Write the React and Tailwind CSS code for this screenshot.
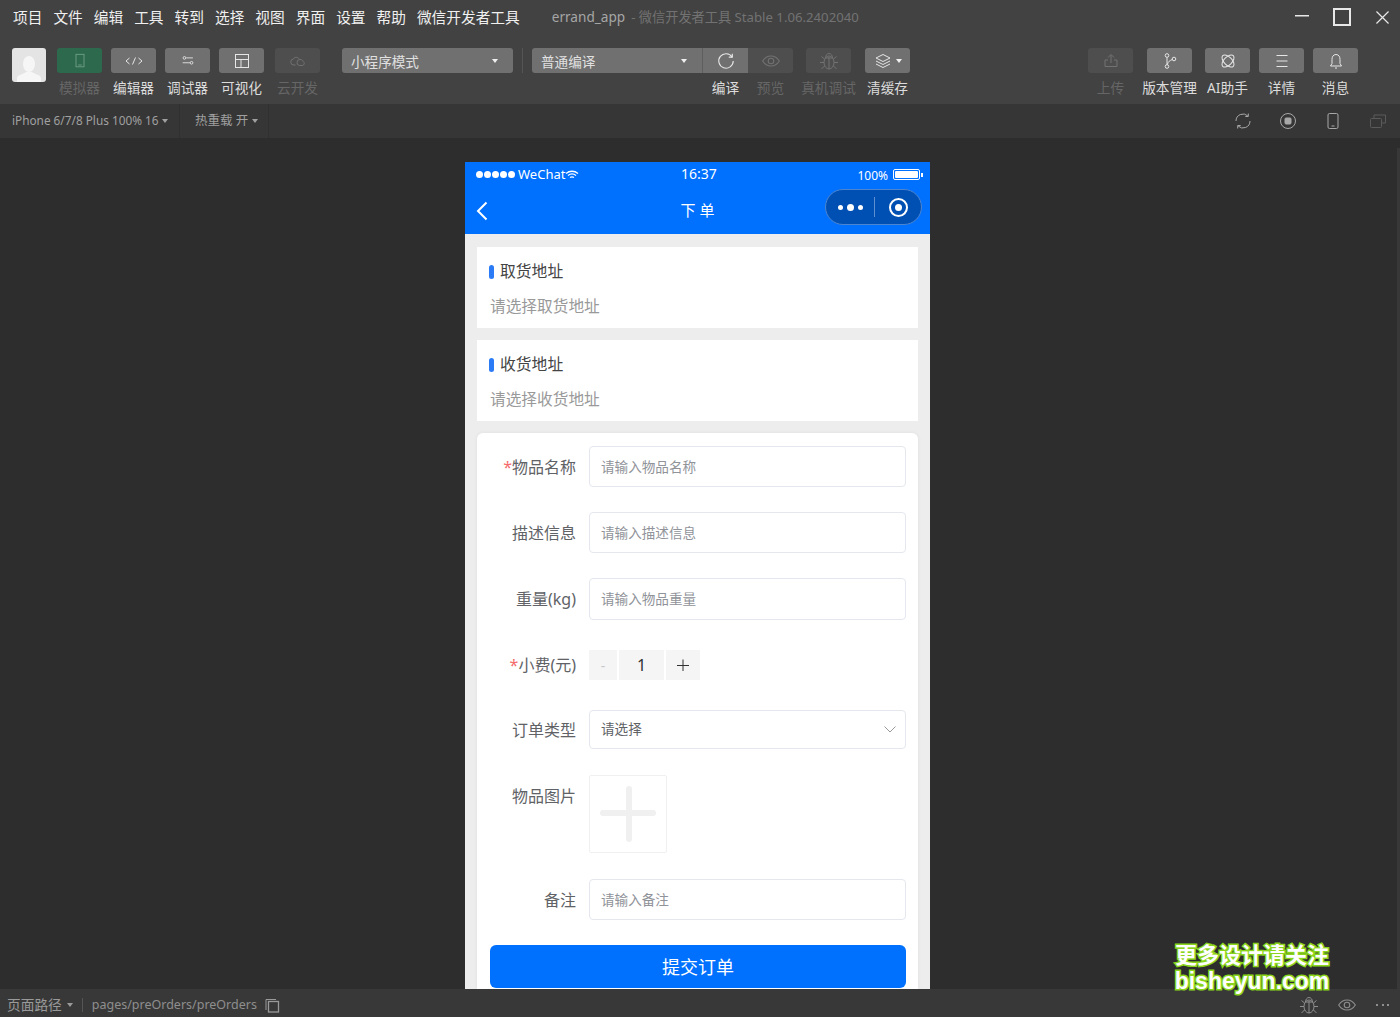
const MENU = ['项目', '文件', '编辑', '工具', '转到', '选择', '视图', '界面', '设置', '帮助', '微信开发者工具'];

function Icon({ children, size = 18, className = '' }) {
  return (
    <svg width={size} height={size} viewBox="0 0 18 18" fill="none" stroke="currentColor" strokeWidth="1" className={className}>
      {children}
    </svg>
  );
}

function Caret({ className = '' }) {
  return <span className={`inline-block w-0 h-0 border-x-[3px] border-x-transparent border-t-[4px] border-t-current ${className}`} />;
}

function ToolBtn({ label, on = true, bg, className = '', children }) {
  return (
    <div className={`w-[45px] flex flex-col items-center shrink-0 ${className}`}>
      <div
        className={`w-[45px] h-[25px] rounded-[3px] flex items-center justify-center ${
          bg ? bg : on ? 'bg-[#707070] text-[#e6e6e6]' : 'bg-[#4e4e4e] text-[#727272]'
        }`}
      >
        {children}
      </div>
      <span className={`mt-[5px] text-[13.7px] leading-[20px] whitespace-nowrap ${on ? 'text-[#dcdcdc]' : 'text-[#666666]'}`}>{label}</span>
    </div>
  );
}

function BugIcon({ size = 20 }) {
  return (
    <svg width={size} height={size} viewBox="0 0 20 20" fill="none" stroke="currentColor" strokeWidth="1">
      <ellipse cx="10" cy="11.5" rx="5" ry="6.5" />
      <path d="M6.500 7C6.500 4.500 8 2.500 10 2.500s3.500 2 3.500 4.500M10 6v12M6.500 7h7" />
      <path d="M5.500 8 2.500 5.500M14.500 8l3-2.500M5 11.500H1M15 11.500h4M5.500 15 2.500 18M14.500 15l3 3" />
    </svg>
  );
}

function EyeIcon({ size = 20 }) {
  return (
    <Icon size={size}>
      <path d="M1.500 9C3.500 5.800 6 4.500 9 4.500s5.500 1.300 7.500 4.500c-2 3.200-4.500 4.500-7.500 4.500S3.500 12.200 1.500 9z" />
      <circle cx="9" cy="9" r="2.500" />
    </Icon>
  );
}

function AddressCard({ title, placeholder, className = '' }) {
  return (
    <div className={`mx-3 bg-white h-[81px] px-3 ${className}`}>
      <div className="flex items-center h-[50px]">
        <span className="w-[5px] h-[14px] rounded-full bg-[#2b7bf6]" />
        <span className="ml-[6px] text-[15.8px] text-[#444444]">{title}</span>
      </div>
      <div className="text-[15.7px] leading-[20px] text-[#999999] mt-[-1px] ml-px">{placeholder}</div>
    </div>
  );
}

function Row({ label, required, height, className = '', children, labelClass = 'items-center' }) {
  return (
    <div className={`flex ${className}`} style={{ height }}>
      <div className={`w-[87px] shrink-0 flex justify-end text-[16px] text-[#606266] ${labelClass}`}>
        {required && <span className="text-[#f56c6c]">*</span>}
        {label}
      </div>
      <div className="ml-[13px] flex-1 min-w-0">{children}</div>
    </div>
  );
}

function TextBox({ placeholder }) {
  return (
    <div className="h-full border border-[#e4e7ed] rounded-[4px] px-[11px] pt-px flex items-center text-[13.6px] text-[#909399]">
      {placeholder}
    </div>
  );
}

export default function App() {
  return (
    <div className='relative w-full h-[1017px] overflow-hidden flex flex-col bg-[#2d2d2d] font-["Noto_Sans","Noto_Sans_CJK_SC",sans-serif]'>
      {/* title + toolbar */}
      <div className="h-[104px] shrink-0 bg-[#424242] relative">
        <div className="h-[34px] flex items-center pl-[13px]">
          <div className="flex gap-[11px] text-[14.7px] text-[#f0f0f0]">
            {MENU.map((m) => (
              <span key={m}>{m}</span>
            ))}
          </div>
          <span className="ml-[32px] pt-px text-[13.6px] text-[#a6a6a6]">errand_app</span>
          <span className="ml-[6px] pt-px text-[13.2px] text-[#727272]">- 微信开发者工具 Stable 1.06.2402040</span>
          <div className="ml-auto flex items-center text-[#e8e8e8]">
            <svg width="14" height="2" className="mr-[24px] mb-[2px]"><rect width="14" height="1.5" fill="currentColor" /></svg>
            <span className="w-[18px] h-[18px] border-2 border-current mr-[25px]" />
            <svg width="13" height="13" viewBox="0 0 14 14" className="mr-[11px]" stroke="currentColor" strokeWidth="1.3"><path d="M.5.5l13 13M13.5.5l-13 13" /></svg>
          </div>
        </div>
        <div className="flex items-start pl-[12px] mt-[14px]">
          <div className="w-[34px] h-[34px] bg-[#e4e4e4] rounded-[3px] flex items-end justify-center overflow-hidden shrink-0">
            <svg width="26" height="28" viewBox="0 0 26 28" fill="#f6f6f6">
              <ellipse cx="13" cy="10" rx="6" ry="8" />
              <path d="M1 28v-4c0-3 7-4 9-6h6c2 2 9 3 9 6v4z" />
            </svg>
          </div>
          <ToolBtn label="模拟器" on={false} bg="bg-[#2d6a4d] text-[#6f9f88]" className="ml-[11px]">
            <Icon size={16}><rect x="4.500" y="1.500" width="9" height="14" /><path d="M7 13.500h4" /></Icon>
          </ToolBtn>
          <ToolBtn label="编辑器" className="ml-[9px]">
            <Icon size={18}><path d="M4.500 6 1 9l3.500 3M13.500 6 17 9l-3.500 3M10.500 5.500l-3 7" /></Icon>
          </ToolBtn>
          <ToolBtn label="调试器" className="ml-[9px]">
            <Icon size={16}><circle cx="5" cy="5.500" r="1.500" /><path d="M7 5.500h7.500M3 11h8.500" /><circle cx="13" cy="11" r="1.500" /></Icon>
          </ToolBtn>
          <ToolBtn label="可视化" className="ml-[9px]">
            <Icon size={18}><rect x="2.500" y="2.500" width="13" height="13" /><path d="M2.500 7.500h13M8 7.500v8" /></Icon>
          </ToolBtn>
          <ToolBtn label="云开发" on={false} className="ml-[11px]">
            <Icon size={18}>
              <path d="M6.500 13H5a3 3 0 0 1-.5-6c.6-2 4.500-2.500 5.500 0" />
              <path d="M8 10.500a3 3 0 0 1 3-3c2 0 3 1 3.200 2a2.200 2.200 0 0 1-.7 4H10.500A2.800 2.800 0 0 1 8 10.500z" />
            </Icon>
          </ToolBtn>
          <div className="ml-[22px] w-[171px] h-[25px] rounded-[3px] bg-[#707070] flex items-center justify-between pl-[9px] pr-[15px] pt-[3px] text-[13.6px] text-[#e0e0e0] shrink-0">
            小程序模式
            <Caret className="text-[#f0f0f0] mb-[3px]" />
          </div>
          <span className="ml-[9px] w-px h-[25px] bg-[#555555]" />
          <div className="ml-[9px] w-[171px] h-[25px] rounded-l-[3px] bg-[#707070] flex items-center justify-between pl-[9px] pr-[15px] pt-[3px] text-[13.6px] text-[#e0e0e0] shrink-0 border-r border-[#5e5e5e]">
            普通编译
            <Caret className="text-[#f0f0f0] mb-[3px]" />
          </div>
          <ToolBtn label="编译" bg="bg-[#707070] text-[#e6e6e6] rounded-l-none rounded-r-none">
            <Icon size={20}><path d="M14.500 5.500A6.500 6.500 0 1 0 15.500 9" /><path d="M11.500 5.500h3.200V2.500" /></Icon>
          </ToolBtn>
          <ToolBtn label="预览" on={false} bg="bg-[#4e4e4e] text-[#727272] rounded-l-none">
            <EyeIcon />
          </ToolBtn>
          <ToolBtn label="真机调试" on={false} className="ml-[13px]"><BugIcon /></ToolBtn>
          <ToolBtn label="清缓存" className="ml-[14px]">
            <Icon size={18}><path d="m9 2.500 7 3.500-7 3.500L2 6zM2 9l7 3.500L16 9M2 12l7 3.500 7-3.500" /></Icon>
            <Caret className="ml-[4px] text-[#f0f0f0]" />
          </ToolBtn>
          <ToolBtn label="上传" on={false} className="ml-auto">
            <Icon size={18}><path d="M9 11V3M6 5.500l3-3 3 3M6 8H3v6.500h12V8h-3" /></Icon>
          </ToolBtn>
          <ToolBtn label="版本管理" className="ml-[14px]">
            <Icon size={18}><circle cx="6" cy="3.500" r="1.800" /><circle cx="6" cy="14.500" r="1.800" /><circle cx="13" cy="7" r="1.800" /><path d="M6 5.300v7.400M11.300 7.500C9 8.500 7 9.500 6.300 12.700" /></Icon>
          </ToolBtn>
          <ToolBtn label="AI助手" className="ml-[13px]">
            <Icon size={18}><ellipse cx="9" cy="9" rx="7.500" ry="4" transform="rotate(45 9 9)" /><ellipse cx="9" cy="9" rx="7.500" ry="4" transform="rotate(-45 9 9)" /></Icon>
          </ToolBtn>
          <ToolBtn label="详情" className="ml-[9px]">
            <Icon size={18}><path d="M3.500 3.500h11M3.500 9h11M3.500 14.500h11" /></Icon>
          </ToolBtn>
          <ToolBtn label="消息" className="ml-[9px] mr-[42px]">
            <Icon size={18}><path d="M9 2.500c-3 0-4 2.500-4 5v4L3.500 14h11L13 11.500v-4c0-2.500-1-5-4-5zM8 16h2" /></Icon>
          </ToolBtn>
        </div>
      </div>

      {/* device bar */}
      <div className="h-[34px] shrink-0 bg-[#363636] flex items-center text-[11.8px] text-[#a0a0a0]">
        <div className="w-[180px] h-full flex items-center pl-[12px] border-r border-[#303030]">
          iPhone 6/7/8 Plus 100% 16 <Caret className="ml-[3px]" />
        </div>
        <div className="w-[89px] h-full flex items-center pl-[15px] border-r border-[#303030] text-[12.5px]">
          热重载 开 <Caret className="ml-[4px]" />
        </div>
        <div className="ml-auto flex items-center gap-[27px] pr-[13px] text-[#a8a8a8]">
          <Icon><path d="M2 9a7 7 0 0 1 11.900-5M16 9a7 7 0 0 1-11.900 5" /><path d="M14.300 1.500v3H11.300M3.700 16.500v-3h3" /></Icon>
          <Icon><circle cx="9" cy="9" r="7.500" /><rect x="6" y="6" width="6" height="6" rx="1" fill="currentColor" /></Icon>
          <Icon><rect x="4" y="1.500" width="10" height="15" rx="1.500" /><path d="M7.500 14h3" /></Icon>
          <Icon className="text-[#5a5a5a]"><rect x="1.500" y="6.500" width="11" height="9" rx="1" /><path d="M5 6.500V3h11.500v8h-4" /></Icon>
        </div>
      </div>

      {/* simulator */}
      <div className="flex-1 min-h-0 flex justify-center pt-[24px] pr-[5px] relative">
        <div className="w-[465px] bg-[#ededed] overflow-hidden flex flex-col text-[#333333]">
          <div className="bg-[#0070ff] h-[72px] shrink-0 text-white relative">
            <div className="h-[25px] flex items-center pl-[11px] pr-[7px] text-[13px]">
              <div className="flex items-center w-[200px]">
                <span className="flex gap-[1px]">
                  {[0, 1, 2, 3, 4].map((i) => (
                    <span key={i} className="w-[7px] h-[7px] rounded-full bg-white" />
                  ))}
                </span>
                <span className="ml-[3px]">WeChat</span>
                <svg width="14" height="10" viewBox="0 0 14 10" fill="none" stroke="white" strokeWidth="1.300">
                  <path d="M1 3.500c3.500-3 8.500-3 12 0M3 5.500c2.500-2 5.500-2 8 0M5 7.500c1.300-.8 2.700-.8 4 0" />
                </svg>
              </div>
              <span className="ml-[5px] text-[14px] mb-[2px]">16:37</span>
              <div className="ml-auto flex items-center text-[12px]">
                <span className="pt-[2px]">100%</span>
                <span className="ml-[5px] w-[27px] h-[11px] border border-white rounded-[2px] p-px flex">
                  <span className="flex-1 bg-white rounded-[1px]" />
                </span>
                <span className="w-[2px] h-[4px] bg-white ml-px" />
              </div>
            </div>
            <div className="relative h-[47px] flex items-center justify-center">
              <svg width="12" height="20" viewBox="0 0 12 20" fill="none" stroke="white" strokeWidth="2" className="absolute left-[11px] top-[14px]">
                <path d="M10.500 1.500 2 10l8.500 8.500" />
              </svg>
              <span className="text-[15px] tracking-[4px] ml-[4px]">下单</span>
              <div className="absolute right-[8px] top-[2px] w-[97px] h-[36px] rounded-full bg-[#0050b4] border border-[#4d85cf] flex items-center">
                <div className="w-[48px] flex items-center justify-center gap-[4px]">
                  <span className="w-[5px] h-[5px] rounded-full bg-white" />
                  <span className="w-[7px] h-[7px] rounded-full bg-white" />
                  <span className="w-[5px] h-[5px] rounded-full bg-white" />
                </div>
                <span className="w-px h-[20px] bg-[#5f8fd0]" />
                <div className="flex-1 flex items-center justify-center">
                  <span className="w-[19px] h-[19px] rounded-full border-2 border-white flex items-center justify-center">
                    <span className="w-[7px] h-[7px] rounded-full bg-white" />
                  </span>
                </div>
              </div>
            </div>
          </div>

          <AddressCard title="取货地址" placeholder="请选择取货地址" className="mt-[13px]" />
          <AddressCard title="收货地址" placeholder="请选择收货地址" className="mt-[12px]" />

          <div className="mx-3 mt-[12px] bg-white rounded-t-[6px] flex-1 pt-[13px] px-[12px] min-h-0 shadow-[0_0_4px_rgba(0,0,0,0.06)]">
            <Row label="物品名称" required height={41}><TextBox placeholder="请输入物品名称" /></Row>
            <Row label="描述信息" height={41} className="mt-[25px]"><TextBox placeholder="请输入描述信息" /></Row>
            <Row label="重量(kg)" height={42} className="mt-[25px]"><TextBox placeholder="请输入物品重量" /></Row>
            <Row label="小费(元)" required height={30} className="mt-[30px]">
              <div className="flex h-full gap-[2px]">
                <span className="w-[28px] bg-[#f5f5f5] flex items-center justify-center text-[#c8c9cc] text-[14px]">-</span>
                <span className="w-[45px] bg-[#f5f5f5] flex items-center justify-center text-[16px] text-[#323233]">1</span>
                <span className="w-[34px] bg-[#f5f5f5] flex items-center justify-center text-[#323233]">
                  <svg width="12" height="12" viewBox="0 0 12 12" stroke="currentColor"><path d="M0 6.500h12M6 .5v12" /></svg>
                </span>
              </div>
            </Row>
            <Row label="订单类型" height={39} className="mt-[30px]">
              <div className="h-full border border-[#e4e7ed] rounded-[4px] pl-[11px] pr-[9px] flex items-center justify-between text-[13.6px] text-[#606266]">
                请选择
                <svg width="12" height="7" viewBox="0 0 12 7" fill="none" stroke="#999999"><path d="m.5.500 5.500 5.500L11.500.5" /></svg>
              </div>
            </Row>
            <Row label="物品图片" height={78} className="mt-[26px]" labelClass="items-start pt-[9px]">
              <div className="w-[78px] h-[78px] border border-[#f0f0f0] rounded-[2px] relative">
                <span className="absolute left-[10px] top-[34px] w-[56px] h-[6px] rounded-full bg-[#f0f0f0]" />
                <span className="absolute left-[36px] top-[10px] w-[6px] h-[56px] rounded-full bg-[#f0f0f0]" />
              </div>
            </Row>
            <Row label="备注" height={41} className="mt-[26px]"><TextBox placeholder="请输入备注" /></Row>
            <div className="mt-[25px] ml-px h-[43px] pt-px bg-[#0070ff] rounded-[6px] flex items-center justify-center text-white text-[18px]">提交订单</div>
          </div>
        </div>
        <span className="absolute right-0 top-[10px] bottom-0 w-[3px] bg-[#383838]" />
      </div>

      {/* status bar */}
      <div className="h-[28px] shrink-0 bg-[#383838] flex items-center pt-[4px] text-[13.7px] text-[#9a9a9a]">
        <span className="ml-[7px]">页面路径</span>
        <Caret className="ml-[5px]" />
        <span className="ml-[9px] w-px h-[14px] bg-[#555555]" />
        <span className="ml-[9px] text-[12.5px] text-[#8e8e8e]">pages/preOrders/preOrders</span>
        <svg width="15" height="15" viewBox="0 0 15 15" fill="none" stroke="#9a9a9a" className="ml-[8px]">
          <path d="M1 12V1.500h10" />
          <rect x="3.500" y="3.500" width="10" height="10.500" strokeWidth="1.300" />
        </svg>
        <div className="ml-auto flex items-center pr-[11px] text-[#8e8e8e]">
          <BugIcon size={20} />
          <span className="ml-[18px]"><EyeIcon size={20} /></span>
          <span className="ml-[19px] flex gap-[3.5px]">
            <span className="w-[2px] h-[2px] bg-current" />
            <span className="w-[2px] h-[2px] bg-current" />
            <span className="w-[2px] h-[2px] bg-current" />
          </span>
        </div>
      </div>

      {/* watermark */}
      <div className="absolute left-[1173px] top-[941px] w-[158px] text-center text-white font-bold leading-[27px] [-webkit-text-stroke:3px_#8ad41c] [paint-order:stroke_fill]">
        <div className="text-[22px] whitespace-nowrap">更多设计请关注</div>
        <div className="text-[23px] whitespace-nowrap font-['Liberation_Sans',sans-serif]">bisheyun.com</div>
      </div>
    </div>
  );
}
